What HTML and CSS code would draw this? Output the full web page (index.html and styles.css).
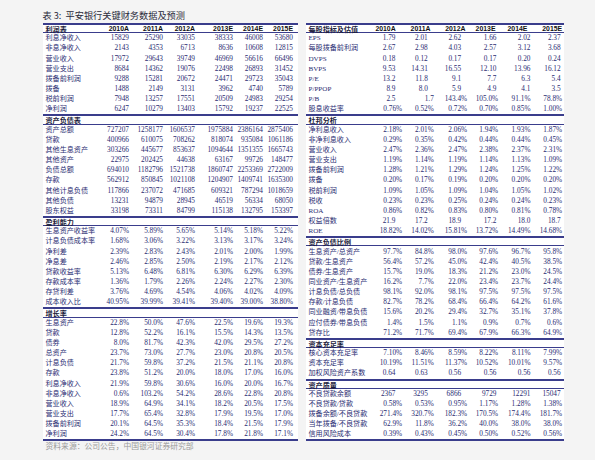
FILE: index.html
```html
<!DOCTYPE html>
<html lang="zh">
<head>
<meta charset="utf-8">
<title>平安银行关键财务数据及预测</title>
<link rel="stylesheet" href="styles.css">
</head>
<body>
<div class="page">
  <div class="title">表 3:&nbsp; 平安银行关键财务数据及预测</div>
  <div class="tables">
    <div class="t tl">
      <div class="r h"><span>利润表</span><span>2010A</span><span>2011A</span><span>2012A</span><span>2013E</span><span>2014E</span><span>2015E</span></div>
      <div class="r"><span>利息净收入</span><span>15829</span><span>25290</span><span>33035</span><span>38333</span><span>46008</span><span>53680</span></div>
      <div class="r"><span>非息净收入</span><span>2143</span><span>4353</span><span>6713</span><span>8636</span><span>10608</span><span>12815</span></div>
      <div class="r"><span>营业收入</span><span>17972</span><span>29643</span><span>39749</span><span>46969</span><span>56616</span><span>66496</span></div>
      <div class="r"><span>营业支出</span><span>8684</span><span>14362</span><span>19076</span><span>22498</span><span>26893</span><span>31452</span></div>
      <div class="r"><span>拨备前利润</span><span>9288</span><span>15281</span><span>20672</span><span>24471</span><span>29723</span><span>35043</span></div>
      <div class="r"><span>拨备</span><span>1488</span><span>2149</span><span>3131</span><span>3962</span><span>4740</span><span>5789</span></div>
      <div class="r"><span>税前利润</span><span>7948</span><span>13257</span><span>17551</span><span>20509</span><span>24983</span><span>29254</span></div>
      <div class="r"><span>净利润</span><span>6247</span><span>10279</span><span>13403</span><span>15792</span><span>19237</span><span>22525</span></div>
      <div class="r s"><span>资产负债表</span></div>
      <div class="r"><span>资产总额</span><span>727207</span><span>1258177</span><span>1606537</span><span>1975884</span><span>2386164</span><span>2875406</span></div>
      <div class="r"><span>贷款</span><span>400966</span><span>610075</span><span>708262</span><span>818074</span><span>935084</span><span>1061186</span></div>
      <div class="r"><span>其他生息资产</span><span>303266</span><span>445677</span><span>853637</span><span>1094644</span><span>1351355</span><span>1665743</span></div>
      <div class="r"><span>其他资产</span><span>22975</span><span>202425</span><span>44638</span><span>63167</span><span>99726</span><span>148477</span></div>
      <div class="r"><span>负债总额</span><span>694010</span><span>1182796</span><span>1521738</span><span>1860747</span><span>2253369</span><span>2722009</span></div>
      <div class="r"><span>存款</span><span>562912</span><span>850845</span><span>1021108</span><span>1204907</span><span>1409741</span><span>1635300</span></div>
      <div class="r"><span>其他计息负债</span><span>117866</span><span>237072</span><span>471685</span><span>609321</span><span>787294</span><span>1018659</span></div>
      <div class="r"><span>其他负债</span><span>13231</span><span>94879</span><span>28945</span><span>46519</span><span>56334</span><span>68050</span></div>
      <div class="r"><span>股东权益</span><span>33198</span><span>73311</span><span>84799</span><span>115138</span><span>132795</span><span>153397</span></div>
      <div class="r s"><span>盈利能力</span></div>
      <div class="r"><span>生息资产收益率</span><span>4.07%</span><span>5.89%</span><span>5.65%</span><span>5.14%</span><span>5.18%</span><span>5.22%</span></div>
      <div class="r"><span>计息负债成本率</span><span>1.68%</span><span>3.06%</span><span>3.22%</span><span>3.13%</span><span>3.17%</span><span>3.24%</span></div>
      <div class="r"><span>净利差</span><span>2.39%</span><span>2.83%</span><span>2.43%</span><span>2.01%</span><span>2.00%</span><span>1.99%</span></div>
      <div class="r"><span>净息差</span><span>2.46%</span><span>2.85%</span><span>2.50%</span><span>2.19%</span><span>2.17%</span><span>2.12%</span></div>
      <div class="r"><span>贷款收益率</span><span>5.13%</span><span>6.48%</span><span>6.81%</span><span>6.30%</span><span>6.29%</span><span>6.39%</span></div>
      <div class="r"><span>存款成本率</span><span>1.36%</span><span>1.79%</span><span>2.26%</span><span>2.24%</span><span>2.27%</span><span>2.30%</span></div>
      <div class="r"><span>存贷利差</span><span>3.76%</span><span>4.69%</span><span>4.54%</span><span>4.06%</span><span>4.02%</span><span>4.09%</span></div>
      <div class="r"><span>成本收入比</span><span>40.95%</span><span>39.99%</span><span>39.41%</span><span>39.40%</span><span>39.00%</span><span>38.80%</span></div>
      <div class="r s"><span>增长率</span></div>
      <div class="r"><span>生息资产</span><span>22.8%</span><span>50.0%</span><span>47.6%</span><span>22.5%</span><span>19.6%</span><span>19.3%</span></div>
      <div class="r"><span>贷款</span><span>12.8%</span><span>52.2%</span><span>16.1%</span><span>15.5%</span><span>14.3%</span><span>13.5%</span></div>
      <div class="r"><span>债券</span><span>8.0%</span><span>81.7%</span><span>42.3%</span><span>42.0%</span><span>29.5%</span><span>27.2%</span></div>
      <div class="r"><span>总资产</span><span>23.7%</span><span>73.0%</span><span>27.7%</span><span>23.0%</span><span>20.8%</span><span>20.5%</span></div>
      <div class="r"><span>计息负债</span><span>21.7%</span><span>59.8%</span><span>37.2%</span><span>21.5%</span><span>21.1%</span><span>20.8%</span></div>
      <div class="r"><span>存款</span><span>23.8%</span><span>51.2%</span><span>20.0%</span><span>18.0%</span><span>17.0%</span><span>16.0%</span></div>
      <div class="r"><span>利息净收入</span><span>21.9%</span><span>59.8%</span><span>30.6%</span><span>16.0%</span><span>20.0%</span><span>16.7%</span></div>
      <div class="r"><span>非息净收入</span><span>0.6%</span><span>103.2%</span><span>54.2%</span><span>28.6%</span><span>22.8%</span><span>20.8%</span></div>
      <div class="r"><span>营业收入</span><span>18.9%</span><span>64.9%</span><span>34.1%</span><span>18.2%</span><span>20.5%</span><span>17.5%</span></div>
      <div class="r"><span>营业支出</span><span>17.7%</span><span>65.4%</span><span>32.8%</span><span>17.9%</span><span>19.5%</span><span>17.0%</span></div>
      <div class="r"><span>拨备前利润</span><span>20.1%</span><span>64.5%</span><span>35.3%</span><span>18.4%</span><span>21.5%</span><span>17.9%</span></div>
      <div class="r"><span>净利润</span><span>24.2%</span><span>64.5%</span><span>30.4%</span><span>17.8%</span><span>21.8%</span><span>17.1%</span></div>
    </div>
    <div class="t tr">
      <div class="r h"><span>每股指标及估值</span><span>2010A</span><span>2011A</span><span>2012A</span><span>2013E</span><span>2014E</span><span>2015E</span></div>
      <div class="r pl"><span>EPS</span><span>1.79</span><span>2.01</span><span>2.62</span><span>1.66</span><span>2.02</span><span>2.37</span></div>
      <div class="r pl"><span>每股拨备前利润</span><span>2.67</span><span>2.98</span><span>4.03</span><span>2.57</span><span>3.12</span><span>3.68</span></div>
      <div class="r pl"><span>DVPS</span><span>0.18</span><span>0.12</span><span>0.17</span><span>0.17</span><span>0.20</span><span>0.24</span></div>
      <div class="r pl"><span>BVPS</span><span>9.53</span><span>14.31</span><span>16.55</span><span>12.10</span><span>13.96</span><span>16.12</span></div>
      <div class="r pl"><span>P/E</span><span>13.2</span><span>11.8</span><span>9.1</span><span>7.7</span><span>6.3</span><span>5.4</span></div>
      <div class="r pl"><span>P/PPOP</span><span>8.9</span><span>8.0</span><span>5.9</span><span>4.9</span><span>4.1</span><span>3.5</span></div>
      <div class="r pb"><span>P/B</span><span>2.5</span><span>1.7</span><span>143.4%</span><span>105.0%</span><span>91.1%</span><span>78.8%</span></div>
      <div class="r"><span>股息收益率</span><span>0.76%</span><span>0.52%</span><span>0.72%</span><span>0.70%</span><span>0.85%</span><span>1.00%</span></div>
      <div class="r s"><span>杜邦分析</span></div>
      <div class="r"><span>净利息收入</span><span>2.18%</span><span>2.01%</span><span>2.06%</span><span>1.94%</span><span>1.93%</span><span>1.87%</span></div>
      <div class="r"><span>非净利息收入</span><span>0.29%</span><span>0.35%</span><span>0.42%</span><span>0.44%</span><span>0.44%</span><span>0.45%</span></div>
      <div class="r"><span>营业收入</span><span>2.47%</span><span>2.36%</span><span>2.47%</span><span>2.38%</span><span>2.37%</span><span>2.31%</span></div>
      <div class="r"><span>营业支出</span><span>1.19%</span><span>1.14%</span><span>1.19%</span><span>1.14%</span><span>1.13%</span><span>1.09%</span></div>
      <div class="r"><span>拨备前利润</span><span>1.28%</span><span>1.21%</span><span>1.29%</span><span>1.24%</span><span>1.25%</span><span>1.22%</span></div>
      <div class="r"><span>拨备</span><span>0.20%</span><span>0.17%</span><span>0.19%</span><span>0.20%</span><span>0.20%</span><span>0.20%</span></div>
      <div class="r"><span>税前利润</span><span>1.09%</span><span>1.05%</span><span>1.09%</span><span>1.04%</span><span>1.05%</span><span>1.02%</span></div>
      <div class="r"><span>税收</span><span>0.23%</span><span>0.23%</span><span>0.25%</span><span>0.24%</span><span>0.24%</span><span>0.23%</span></div>
      <div class="r"><span>ROA</span><span>0.86%</span><span>0.82%</span><span>0.83%</span><span>0.80%</span><span>0.81%</span><span>0.78%</span></div>
      <div class="r pl"><span>权益倍数</span><span>21.9</span><span>17.2</span><span>18.9</span><span>17.2</span><span>18.0</span><span>18.7</span></div>
      <div class="r"><span>ROE</span><span>18.82%</span><span>14.02%</span><span>15.81%</span><span>13.72%</span><span>14.49%</span><span>14.68%</span></div>
      <div class="r s"><span>资产负债比例</span></div>
      <div class="r"><span>生息资产/总资产</span><span>97.7%</span><span>84.8%</span><span>98.0%</span><span>97.6%</span><span>96.7%</span><span>95.8%</span></div>
      <div class="r"><span>贷款/生息资产</span><span>56.4%</span><span>57.2%</span><span>45.0%</span><span>42.4%</span><span>40.5%</span><span>38.5%</span></div>
      <div class="r"><span>债券/生息资产</span><span>15.7%</span><span>19.0%</span><span>18.3%</span><span>21.2%</span><span>23.0%</span><span>24.5%</span></div>
      <div class="r"><span>同业资产/生息资产</span><span>16.2%</span><span>7.7%</span><span>22.0%</span><span>23.4%</span><span>23.7%</span><span>24.4%</span></div>
      <div class="r"><span>计息负债/总负债</span><span>98.1%</span><span>92.0%</span><span>98.1%</span><span>97.5%</span><span>97.5%</span><span>97.5%</span></div>
      <div class="r"><span>存款/计息负债</span><span>82.7%</span><span>78.2%</span><span>68.4%</span><span>66.4%</span><span>64.2%</span><span>61.6%</span></div>
      <div class="r"><span>同业融资/带息负债</span><span>15.6%</span><span>20.2%</span><span>29.4%</span><span>32.7%</span><span>35.1%</span><span>37.8%</span></div>
      <div class="r"><span>应付债券/带息负债</span><span>1.4%</span><span>1.5%</span><span>1.1%</span><span>0.9%</span><span>0.7%</span><span>0.6%</span></div>
      <div class="r"><span>贷存比</span><span>71.2%</span><span>71.7%</span><span>69.4%</span><span>67.9%</span><span>66.3%</span><span>64.9%</span></div>
      <div class="r s"><span>资本充足率</span></div>
      <div class="r"><span>核心资本充足率</span><span>7.10%</span><span>8.46%</span><span>8.59%</span><span>8.22%</span><span>8.11%</span><span>7.99%</span></div>
      <div class="r"><span>资本充足率</span><span>10.19%</span><span>11.51%</span><span>11.37%</span><span>10.52%</span><span>10.01%</span><span>9.57%</span></div>
      <div class="r pl"><span>加权风险资产系数</span><span>0.64</span><span>0.63</span><span>0.56</span><span>0.56</span><span>0.56</span><span>0.56</span></div>
      <div class="r s"><span>资产质量</span></div>
      <div class="r pl"><span>不良贷款余额</span><span>2367</span><span>3295</span><span>6866</span><span>9729</span><span>12291</span><span>15047</span></div>
      <div class="r"><span>不良贷款/贷款</span><span>0.58%</span><span>0.53%</span><span>0.95%</span><span>1.17%</span><span>1.28%</span><span>1.38%</span></div>
      <div class="r"><span>拨备余额/不良贷款</span><span>271.4%</span><span>320.7%</span><span>182.3%</span><span>170.5%</span><span>174.4%</span><span>181.7%</span></div>
      <div class="r"><span>当年拨备/不良贷款</span><span>62.9%</span><span>11.8%</span><span>36.2%</span><span>40.0%</span><span>38.0%</span><span>38.0%</span></div>
      <div class="r"><span>信用风险成本</span><span>0.39%</span><span>0.43%</span><span>0.45%</span><span>0.50%</span><span>0.52%</span><span>0.56%</span></div>
    </div>
  </div>
  <div class="source">资料来源：公司公告，中国银河证券研究部</div>
</div>
</body>
</html>
```
FILE: styles.css
```css
html, body {
  margin: 0;
  padding: 0;
  background: #f4f4f4;
}
.page {
  width: 595px;
  height: 460px;
  padding-left: 42.5px;
  box-sizing: border-box;
  font-family: "Liberation Serif", "Noto Sans CJK SC", serif;
  color: #2a2c72;
}
.title {
  height: 22.5px;
  padding-top: 8.5px;
  box-sizing: border-box;
  line-height: 13px;
  font-size: 9.2px;
  font-family: "Noto Sans CJK SC", sans-serif;
  color: #2b2b3a;
  white-space: nowrap;
}
.tables {
  display: flex;
  gap: 8px;
  align-items: flex-start;
}
.t {
  background: #fff;
  border-bottom: 2px solid #3a3d8c;
}
.tl {
  width: 255px;
  --cols: 52.5px 34px 34px 32px 38px 30px 30px;
}
.tr {
  width: 258px;
  --cols: 64.7px 32px 31.6px 33.4px 31px 32.3px 31.7px;
}
.r {
  display: grid;
  grid-template-columns: var(--cols);
  height: 10.17px;
  align-items: center;
  font-size: 7.3px;
  line-height: 10px;
  white-space: nowrap;
}
.r > span:first-child {
  padding-left: 3px;
  font-size: 7.1px;
}
.r > span + span {
  text-align: right;
}
.h {
  height: 10.7px;
  box-shadow: inset 0 2px 0 #3a3d8c, inset 0 -1px 0 #3a3d8c;
  padding-top: 1px;
  box-sizing: border-box;
}
.h > span + span {
  font-family: "Liberation Sans", sans-serif;
  font-weight: 700;
  font-size: 6.9px;
  color: #111;
}
.h > span:first-child,
.s > span:first-child {
  font-family: "Noto Sans CJK SC", sans-serif;
  font-weight: 700;
  font-size: 7.1px;
  color: #1c1c3c;
}
.s {
  box-shadow: inset 0 2px 0 #3a3d8c, inset 0 -1px 0 #3a3d8c;
  padding-top: 1px;
  box-sizing: border-box;
}
.tr .h > span:nth-child(2) { padding-right: 6.5px; }
.tr .h > span:nth-child(3) { padding-right: 3.3px; }
.tr .h > span:nth-child(4) { padding-right: 1.7px; }
.tr .h > span:nth-child(5) { padding-right: 2.7px; }
.tr .h > span:nth-child(6) { padding-right: 3px; }
.tr .pl > span:nth-child(2),
.tr .pb > span:nth-child(2) { padding-right: 6.7px; }
.tr .pl > span:nth-child(3) { padding-right: 6px; }
.tr .pl > span:nth-child(4) { padding-right: 6px; }
.tr .pl > span:nth-child(5) { padding-right: 1.7px; }
.tr .pl > span:nth-child(7) { padding-right: 1.5px; }
.source {
  padding-left: 3px;
  line-height: 9px;
  height: 9px;
  font-size: 7.8px;
  font-family: "Noto Sans CJK SC", sans-serif;
  color: #9a9a9a;
  white-space: nowrap;
}
```
